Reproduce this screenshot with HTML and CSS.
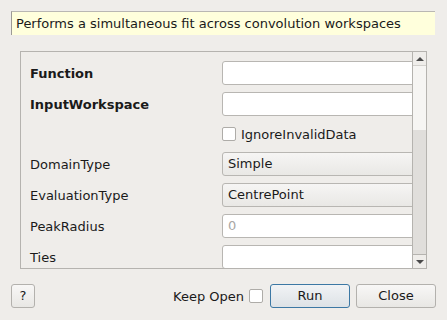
FILE: index.html
```html
<!DOCTYPE html>
<html>
<head>
<title>Fit across convolution workspaces</title>
<link rel="stylesheet" href="styles.css">
</head>
<body>
<div class="dialog">
  <div class="desc">Performs a simultaneous fit across convolution workspaces</div>

  <div class="scrollarea">
    <div class="props">
      <div class="row">
        <span class="label bold">Function</span>
        <span class="field"><span class="edit"></span></span>
      </div>
      <div class="row">
        <span class="label bold">InputWorkspace</span>
        <span class="field"><span class="edit"></span></span>
      </div>
      <div class="row checkrow">
        <span class="label"></span>
        <span class="field"><span class="check"></span><span class="checktext">IgnoreInvalidData</span></span>
      </div>
      <div class="row">
        <span class="label">DomainType</span>
        <span class="field"><span class="combo">Simple</span></span>
      </div>
      <div class="row">
        <span class="label">EvaluationType</span>
        <span class="field"><span class="combo">CentrePoint</span></span>
      </div>
      <div class="row">
        <span class="label">PeakRadius</span>
        <span class="field"><span class="edit placeholder">0</span></span>
      </div>
      <div class="row">
        <span class="label">Ties</span>
        <span class="field"><span class="edit"></span></span>
      </div>
    </div>
    <div class="vscroll">
      <div class="arrow up"></div>
      <div class="handle"></div>
      <div class="trough"></div>
      <div class="arrow down"></div>
    </div>
  </div>

  <div class="buttons">
    <span class="btn small">?</span>
    <span class="spacer"></span>
    <span class="keep">Keep Open</span>
    <span class="check"></span>
    <span class="btn default">Run</span>
    <span class="btn">Close</span>
  </div>
</div>
</body>
</html>
```
FILE: styles.css
```css
body {
    margin: 0;
    background-color: #efedea;
    font-family: "DejaVu Sans", sans-serif;
    font-size: 13px;
    color: #1a1a1a;
}

.dialog {
    width: 447px;
    height: 320px;
    display: flex;
    flex-direction: column;
}

.desc {
    margin: 11px 12px 0 11px;
    height: 23px;
    line-height: 23px;
    padding-left: 4px;
    background-color: #ffffdc;
    border-left: 1px solid #9c9a96;
    border-top: 1px solid #b9b7b3;
    white-space: nowrap;
}

.scrollarea {
    margin: 16px 0 0 20px;
    width: 405px;
    height: 216px;
    border: 1px solid #b5b3af;
    display: flex;
    overflow: hidden;
}

.props {
    width: 391px;
    overflow: hidden;
    padding-top: 9px;
}

.row {
    display: flex;
    align-items: center;
    height: 24px;
    margin-bottom: 7px;
}

.checkrow {
    height: 22px;
}

.label {
    width: 192px;
    padding-left: 9px;
    flex: none;
}

.bold {
    font-weight: bold;
}

.field {
    display: flex;
    align-items: center;
    width: 200px;
    flex: none;
}

.edit, .combo {
    box-sizing: border-box;
    width: 200px;
    height: 24px;
    line-height: 22px;
    border: 1px solid #b8b6b2;
    border-radius: 3px;
    background-color: #ffffff;
    padding-left: 5px;
}

.combo {
    background: linear-gradient(#f6f5f4, #e9e8e5);
    color: #1a1a1a;
}

.placeholder {
    color: #a9a7a4;
}

.check {
    box-sizing: border-box;
    width: 14px;
    height: 14px;
    border: 1px solid #aeaca8;
    border-radius: 2px;
    background-color: #ffffff;
    flex: none;
}

.checktext {
    margin-left: 5px;
}

.vscroll {
    width: 13px;
    border-left: 1px solid #b5b3af;
    display: flex;
    flex-direction: column;
    flex: none;
}

.arrow {
    height: 13px;
    background-color: #efedea;
    display: flex;
    align-items: center;
    justify-content: center;
}

.arrow.up {
    border-bottom: 1px solid #d3d1cd;
}

.arrow.down {
    border-top: 1px solid #b5b3af;
}

.arrow.up::after {
    content: "";
    border-left: 4px solid transparent;
    border-right: 4px solid transparent;
    border-bottom: 4px solid #4a4a4a;
}

.arrow.down::after {
    content: "";
    border-left: 4px solid transparent;
    border-right: 4px solid transparent;
    border-top: 4px solid #4a4a4a;
}

.handle {
    height: 64px;
    background-color: #f6f5f3;
}

.trough {
    flex: 1;
    background-color: #e0dedb;
}

.buttons {
    display: flex;
    align-items: center;
    margin: 15px 11px 0 11px;
    height: 24px;
}

.spacer {
    flex: 1;
}

.btn {
    box-sizing: border-box;
    width: 80px;
    height: 24px;
    line-height: 22px;
    text-align: center;
    border: 1px solid #b3b1ad;
    border-radius: 3px;
    background: linear-gradient(#f8f7f6, #e8e7e4);
    margin-left: 6px;
}

.btn.small {
    width: 24px;
    margin-left: 0;
}

.btn.default {
    border-color: #3c78a4;
    background: linear-gradient(#f1f3f5, #dde2e6);
    margin-left: 7px;
}

.keep {
    margin-right: 5px;
}
```
